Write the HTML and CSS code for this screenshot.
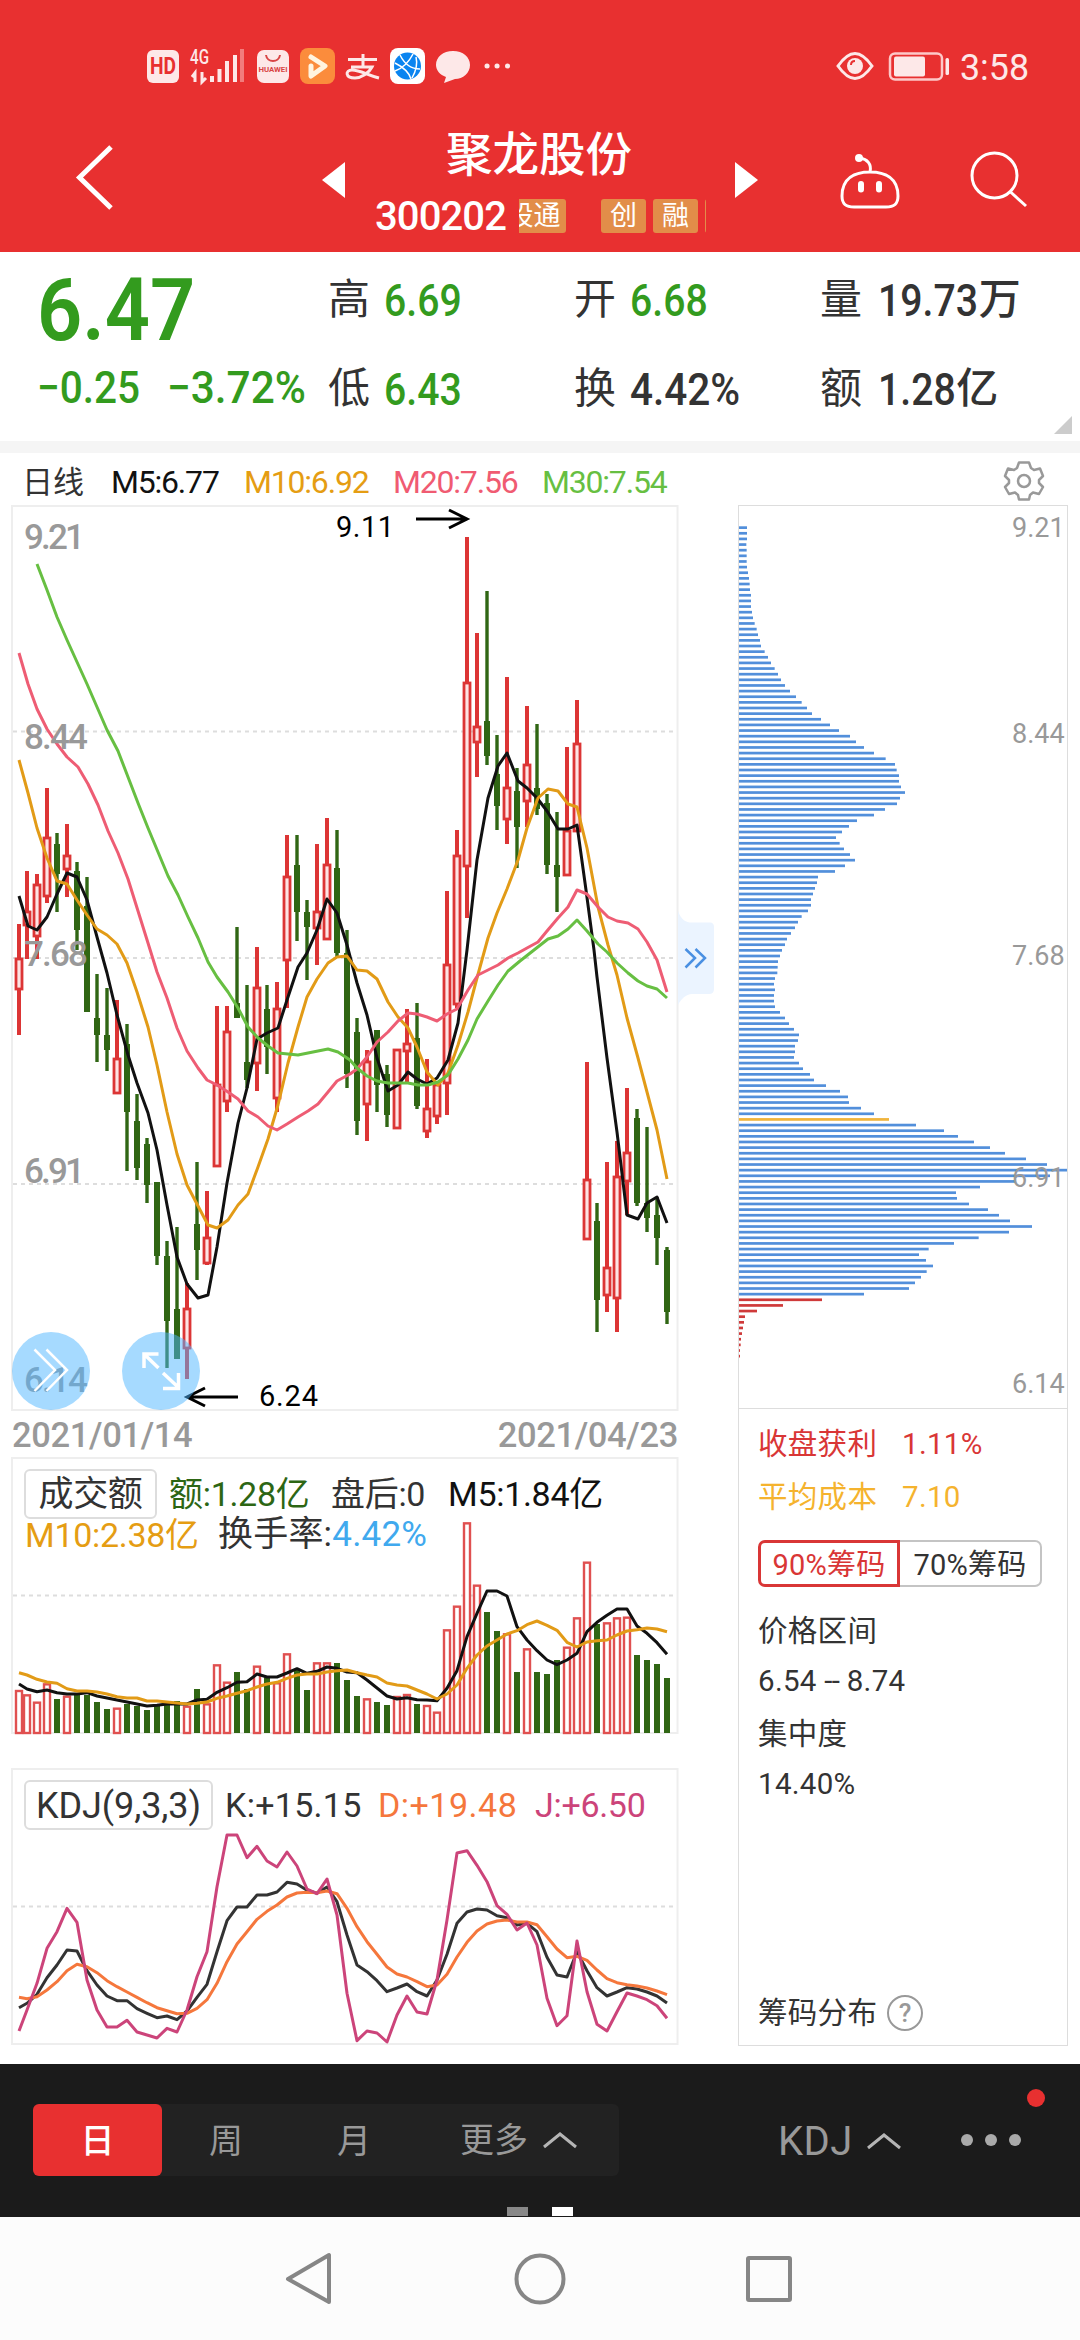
FILE: index.html
```html
<!DOCTYPE html>
<html lang="zh">
	<head>
		<meta charset="utf-8">
		<title>聚龙股份 300202</title>
		<link rel="stylesheet" href="styles.css">
	</head>
	<body>
		<header class="header">
			<div class="status">
				<svg class="status-left" width="400" height="50" viewBox="140 40 400 50">
					<rect x="147" y="50" width="32" height="33" rx="6" fill="#fde8e8"/>
					<text x="150" y="74" class="hd" textLength="26" lengthAdjust="spacingAndGlyphs">HD</text>
					<text x="190" y="64" class="net" textLength="19" lengthAdjust="spacingAndGlyphs">4G</text>
					<path d="M195 82V73l-3 4M202 72v10l4-4" stroke="#fde8e8" stroke-width="3" fill="none"/>
					<path d="M212 76v6M219.500 69v13M227 61v21M235 55v27" stroke="#fde8e8" stroke-width="4"/>
					<path d="M242 49v33" stroke="#f27c7c" stroke-width="4"/>
					<rect x="257" y="50" width="32" height="33" rx="7" fill="#fde8e8"/>
					<path d="M266 55c1 8 13 8 14 0" stroke="#d94545" stroke-width="2" fill="none"/>
					<text x="258.500" y="72" class="huawei" textLength="29" lengthAdjust="spacingAndGlyphs">HUAWEI</text>
					<rect x="300" y="48" width="35" height="36" rx="8" fill="#fb8c3c"/>
					<path d="M311 57l14 9-14 10V66" stroke="#fff4e0" stroke-width="5" stroke-linejoin="round" stroke-linecap="round" fill="none"/>
					<path d="M363 54v13M348 59.500h29M351 67h21c-3 6-11 11-17 11-10 0-10-8-3-8 8 0 15 5 27 8" stroke="#fde8e8" stroke-width="3" fill="none"/>
					<rect x="390" y="48" width="35" height="36" rx="8" fill="#fff"/>
					<circle cx="407.500" cy="66" r="13.500" fill="#0a84f0"/>
					<path d="M400 55c4 8 10 14 20 14M413 54c-4 8-10 14-18 17M395 63c8 4 14 9 16 16M416 57c2 8 0 14-4 21" stroke="#fff" stroke-width="1.500" fill="none"/>
					<path d="M453 51c10 0 17 6 17 14s-7 14-15 14l-11 4 2-6c-6-2-10-7-10-12 0-8 7-14 17-14z" fill="#fde8e8"/>
					<path d="M487 66h.1M497 66h.1M507.500 66h.1" stroke="#fde8e8" stroke-width="5" stroke-linecap="round"/>
				</svg>
				<svg width="200" height="50" viewBox="832 40 200 50">
					<path d="M838 66c7-10 12-12.500 17-12.500s10 2.500 17 12.500c-7 10-12 12.500-17 12.500S845 76 838 66z" stroke="#fde8e8" stroke-width="3" fill="none"/>
					<circle cx="855" cy="66" r="8" fill="#fde8e8"/>
					<path d="M851 65c0-3 2-4 4-4" stroke="#e83030" stroke-width="2" fill="none"/>
					<rect x="890" y="53.500" width="52" height="26" rx="5" stroke="#fdc8c8" stroke-width="2.500" fill="none"/>
					<rect x="894" y="56.500" width="31" height="20" rx="2" fill="#fde8e8"/>
					<rect x="945.500" y="58" width="3.500" height="17" rx="1.500" fill="#fde8e8"/>
					<text x="960" y="80" class="clock" textLength="69" lengthAdjust="spacingAndGlyphs">3:58</text>
				</svg>
			</div>
			<div class="titlebar">
				<svg class="back" width="44" height="70" viewBox="70 142 44 70"><path d="M111 147L79.500 177.500 111 208" stroke="#fff" stroke-width="5" fill="none"/></svg>
				<svg class="prev" width="23" height="36"><path d="M0 18L23 0v36z" fill="#fff"/></svg>
				<div class="stock">
					<h1>聚龙股份</h1>
					<div class="code-row">
						<span class="code">300202</span>
						<span class="tags">
							<i class="tag tag-cut">股通</i><i class="tag">创</i><i class="tag">融</i><i class="tag tag-end"></i>
						</span>
					</div>
				</div>
				<svg class="next" width="23" height="36"><path d="M0 0l23 18L0 36z" fill="#fff"/></svg>
				<svg class="robot" width="66" height="60" viewBox="837 152 66 60" fill="none" stroke="#fff" stroke-width="3">
					<path d="M870 172c-15 0-28 6-28 24 0 9 5 11 12 11h32c7 0 12-2 12-11 0-18-13-24-28-24zM870 172c2-8-3-13-10-14"/>
					<circle cx="859" cy="158" r="3" fill="#fff" stroke-width="2"/>
					<path d="M861 184v5.500M879 184v5.500" stroke-width="6" stroke-linecap="round"/>
				</svg>
				<svg class="search" width="60" height="60" viewBox="968 150 60 60" fill="none" stroke="#fff" stroke-width="3"><circle cx="994.500" cy="175.500" r="22.500"/><path d="M1010 191.500l16 14.500"/></svg>
			</div>
		</header>

		<section class="quote">
			<div class="price-col">
				<b class="price">6.47</b>
				<p><b class="num num-diff change">−0.25</b><b class="num num-rate">−3.72%</b></p>
			</div>
			<dl class="stat">
				<dt>高</dt><dd><b class="num green">6.69</b></dd>
				<dt>低</dt><dd><b class="num green">6.43</b></dd>
			</dl>
			<dl class="stat">
				<dt>开</dt><dd><b class="num green">6.68</b></dd>
				<dt>换</dt><dd><b class="num num-diff">4.42%</b></dd>
			</dl>
			<dl class="stat stat-wide">
				<dt>量</dt><dd><b class="num">19.73</b><em>万</em></dd>
				<dt>额</dt><dd><b class="num short">1.28</b><em>亿</em></dd>
			</dl>
			<i class="corner"></i>
		</section>

		<section class="ma-row">
			<span class="period">日线</span>
			<span class="m5">M5:6.77</span>
			<span class="m10">M10:6.92</span>
			<span class="m20">M20:7.56</span>
			<span class="m30">M30:7.54</span>
			<svg class="gear" width="44" height="44" viewBox="-22 -22 44 44" fill="none" stroke="#999" stroke-width="2.500" stroke-linejoin="round">
				<path d="M-5 -18.500H5L7 -13 10 -11 16 -12.500 19 -5 15 -1V2L19 6 15 13 9 11.500 6 14 5 18.500H-5L-6 14-9 11.500-15 13-19 6-15 2V-1L-19 -5-16 -12.500-10 -11-7 -13z"/>
				<circle r="6"/>
			</svg>
		</section>

		<main class="charts">
			<div class="left">
				<div class="panel">
					<svg id="kline" width="668" height="907" viewBox="11 505 668 907">
						<rect x="12" y="506" width="665.500" height="904" class="frame"/>
						<path d="M13 731.500H677M13 958H677M13 1184H677" class="grid"/>
						<g id="candles"></g>
						<g class="axis">
							<text x="24" y="549" textLength="61">9.21</text>
							<text x="24" y="749" textLength="64">8.44</text>
							<text x="24" y="966" textLength="64">7.68</text>
							<text x="24" y="1183" textLength="61">6.91</text>
							<text x="24" y="1392" textLength="64">6.14</text>
						</g>
						<g class="note">
							<text x="336" y="537" textLength="58">9.11</text>
							<path d="M416 519H466M449 510L467 519 449 528"/>
							<text x="259" y="1406" textLength="59">6.24</text>
							<path d="M238 1397H188M205 1388L187 1397 205 1406"/>
						</g>
						<g class="round-btn">
							<circle cx="51" cy="1371" r="39"/>
							<path d="M34.500 1349.500L55 1370 34.500 1391M46.500 1349.500L67 1370 46.500 1391"/>
							<circle cx="161" cy="1371" r="39"/>
							<path class="expand" d="M158.500 1354H144V1368M144 1354L158.500 1368M163 1373L179 1388M163 1388.500H178.500V1373"/>
						</g>
					</svg>
					<svg class="fold" width="37" height="94" viewBox="678 911 37 94">
						<path d="M678 911C681 920 686 922.500 692 922.500H710Q714 922.500 714 927V989Q714 994 709 994H692C686 994 681 999 678 1005z" fill="#ebf4ff"/>
						<path d="M685.500 949l9.500 9-9.500 9.500M695.500 949l9.500 9-9.500 9.500" stroke="#4a90e2" stroke-width="2.500" fill="none"/>
					</svg>
				</div>
				<div class="dates"><span>2021/01/14</span><span>2021/04/23</span></div>
				<div class="panel">
					<div class="legend">
						<p><span class="pick">成交额</span><span class="deal">额:1.28亿</span><span class="after">盘后:0</span><span class="v5">M5:1.84亿</span></p>
						<p class="second"><span class="v10">M10:2.38亿</span><span class="turn">换手率:<em>4.42%</em></span></p>
					</div>
					<svg id="volume" width="668" height="278" viewBox="11 7 668 278">
						<rect x="12" y="8" width="665.500" height="275" class="frame"/>
						<path d="M13 145.500H677" class="grid"/>
					</svg>
				</div>
				<div class="panel kdj-panel">
					<div class="legend">
						<p><span class="pick pick-kdj">KDJ(9,3,3)</span><span class="k">K:+15.15</span><span class="d">D:+19.48</span><span class="j">J:+6.50</span></p>
					</div>
					<svg id="kdj" width="668" height="278" viewBox="11 18 668 278">
						<rect x="12" y="19" width="665.500" height="275" class="frame"/>
						<path d="M13 156.500H677" class="grid"/>
					</svg>
				</div>
			</div>

			<div class="right">
				<svg id="chips" width="328" height="902" viewBox="739 506 328 902">
					<g id="chipBars"></g>
					<g class="axis-small">
						<text x="1012" y="537">9.21</text>
						<text x="1012" y="743">8.44</text>
						<text x="1012" y="965">7.68</text>
						<text x="1012" y="1187">6.91</text>
						<text x="1012" y="1393">6.14</text>
					</g>
				</svg>
				<div class="chip-info">
					<p class="profit"><span>收盘获利</span>1.11%</p>
					<p class="cost"><span>平均成本</span>7.10</p>
					<div class="switch"><a class="on">90%筹码</a><a>70%筹码</a></div>
					<p class="t1">价格区间</p>
					<p class="t2">6.54 <i>--</i> 8.74</p>
					<p class="t3">集中度</p>
					<p class="t4">14.40%</p>
					<p class="help">筹码分布<i>?</i></p>
				</div>
			</div>
		</main>

		<footer class="toolbar">
			<div class="tabs">
				<a class="on">日</a>
				<a>周</a>
				<a>月</a>
				<a class="more">更多<svg width="34" height="18"><path d="M1 16L17 3l16 13"/></svg></a>
			</div>
			<div class="indicator">KDJ<svg width="34" height="18"><path d="M1 16L17 3l16 13"/></svg></div>
			<div class="dots"><i></i><i></i><i></i></div>
			<i class="badge"></i>
			<div class="pages"><i></i><i class="cur"></i></div>
		</footer>
		<nav class="sysnav">
			<svg width="1080" height="123" viewBox="0 2217 1080 123" fill="none" stroke="#868686" stroke-width="4" stroke-linejoin="round">
				<path d="M329 2255V2302L288 2279z"/>
				<circle cx="540" cy="2279" r="23.500"/>
				<rect x="748" y="2258" width="42" height="42" rx="1"/>
			</svg>
		</nav>
		<script src="chart.js"></script>
	</body>
</html>
```
FILE: styles.css
```css
* {
	margin: 0;
	padding: 0;
	box-sizing: border-box;
}

body {
	width: 1080px;
	height: 2340px;
	overflow: hidden;
	background-color: #fff;
	color: #333;
	font-family: Roboto, "Noto Sans CJK SC", sans-serif;
}

svg {
	display: block;
	flex: none;
}

i, em {
	font-style: normal;
}

/* 顶部 */
.header {
	height: 252px;
	background-color: #e83030;
	color: #fff;
}

.status {
	display: flex;
	justify-content: space-between;
	height: 130px;
	padding: 40px 48px 0 140px;
}

.hd {
	font-size: 23px;
	font-weight: bold;
	fill: #e83030;
}

.net {
	font-size: 20px;
	font-weight: 500;
	fill: #fde8e8;
}

.huawei {
	font-size: 8px;
	font-weight: bold;
	fill: #d94545;
}

.clock {
	font-size: 36px;
	fill: #fde8e8;
}

.titlebar {
	display: flex;
	height: 122px;
}

.back {
	margin: 12px 0 0 70px;
}

.prev {
	margin: 32px 0 0 208px;
}

.stock {
	width: 390px;
	padding-left: 30px;
}

.stock h1 {
	height: 60px;
	padding-left: 71px;
	line-height: 50px;
	font-size: 46.5px;
	font-weight: 500;
	white-space: nowrap;
}

.code-row {
	display: flex;
	height: 50px;
}

.code {
	width: 144px;
	line-height: 53px;
	font-size: 40px;
	font-weight: 500;
	letter-spacing: -0.9px;
}

.tags {
	display: flex;
	width: 187px;
	margin-top: 9px;
	overflow: hidden;
}

.tag {
	flex: none;
	width: 45px;
	height: 34px;
	margin-right: 7px;
	border-radius: 3px;
	background-color: #e28d49;
	line-height: 35px;
	font-size: 27px;
	text-align: center;
}

.tag-cut {
	width: 65px;
	margin-left: -18px;
	margin-right: 35px;
}

.next {
	margin: 32px 0 0 0;
}

.robot {
	margin: 22px 0 0 79px;
}

.search {
	margin: 20px 0 0 65px;
}

/* 行情 */
.quote {
	position: relative;
	display: flex;
	height: 201px;
	border-bottom: 12px solid #f5f5f5;
}

.price-col {
	width: 328px;
	padding-left: 37px;
	color: #339b1e;
}

.price {
	display: block;
	height: 108px;
	padding-top: 8px;
	line-height: 100px;
	font-size: 88px;
	font-weight: 600;
	transform: scaleX(0.9);
	transform-origin: 0 0;
}

.price-col p {
	display: flex;
}

.num {
	display: inline-block;
	line-height: 56px;
	font-size: 45px;
	font-weight: 500;
	transform: scaleX(0.87);
	transform-origin: 0 50%;
}

.num-diff {
	transform: scaleX(0.9);
}

.num-rate {
	transform: scaleX(0.94);
}

.change {
	width: 130px;
}

.stat {
	display: grid;
	grid-template-columns: 56px 190px;
	grid-template-rows: 89px 90px;
	width: 246px;
	padding-top: 21px;
}

.stat dt {
	line-height: 54px;
	font-size: 42px;
}

.stat dd {
	display: flex;
	line-height: 54px;
}

.stat-wide {
	grid-template-columns: 58px 200px;
}

.stat em {
	margin-left: -14px;
	font-size: 42px;
	font-weight: 500;
}

.stat .short + em {
	margin-left: -11px;
}

.green {
	color: #339b1e;
}

.corner {
	position: absolute;
	right: 8px;
	bottom: 7px;
	border-left: 18px solid transparent;
	border-bottom: 18px solid #ccc;
}

/* 均线 */
.ma-row {
	display: flex;
	height: 52px;
	padding-left: 22px;
	line-height: 59px;
	font-size: 32px;
	letter-spacing: -1.2px;
	white-space: nowrap;
}

.ma-row span {
	width: 149px;
}

.ma-row .period {
	width: 89px;
	font-size: 31px;
	letter-spacing: 0;
}

.ma-row .m5 {
	width: 133px;
	color: #111;
}

.m10 {
	color: #e59d13;
}

.m20 {
	color: #f05b72;
}

.m30 {
	color: #67bf42;
}

.gear {
	margin: 6px 0 0 311px;
}

/* 图表 */
.charts {
	display: flex;
	height: 1559px;
	padding-left: 11px;
}

.left {
	width: 668px;
}

.panel {
	position: relative;
}

.kdj-panel {
	margin-top: 33px;
}

.fold {
	position: absolute;
	left: 667px;
	top: 406px;
}

.frame {
	fill: none;
	stroke: #eee;
	stroke-width: 2;
}

.grid {
	stroke: #ddd;
	stroke-width: 2;
	stroke-dasharray: 4 4;
}

.axis {
	font-size: 35px;
	font-weight: 500;
	fill: #999;
}

.axis-small {
	font-size: 27px;
	fill: #999;
}

.note text {
	font-size: 29px;
}

.note path {
	fill: none;
	stroke: #000;
	stroke-width: 3;
}

.round-btn circle {
	fill: rgba(78, 181, 255, 0.5);
}

.round-btn path {
	fill: none;
	stroke: #fff;
	stroke-width: 2.5;
}

.round-btn .expand {
	stroke-width: 3.5;
}

.line {
	fill: none;
	stroke-width: 3;
	stroke-linejoin: round;
}

.dates {
	display: flex;
	justify-content: space-between;
	height: 45px;
	padding: 0 1px 0 1px;
	line-height: 46px;
	font-size: 34.5px;
	font-weight: 500;
	letter-spacing: -0.35px;
	color: #999;
}

.legend {
	position: absolute;
	left: 13px;
	top: 12px;
	font-size: 34px;
	letter-spacing: -0.3px;
	white-space: nowrap;
}

.legend p {
	display: flex;
	line-height: 50px;
}

.legend .second {
	margin-top: -9px;
	padding-left: 1px;
}

.pick {
	width: 133px;
	height: 50px;
	margin-right: 12px;
	border: 2px solid #ddd;
	border-radius: 6px;
	line-height: 48px;
	font-size: 35px;
	text-align: center;
}

.deal {
	width: 162px;
	color: #2d6614;
}

.after {
	width: 117px;
}

.v5 {
	color: #111;
}

.v10 {
	width: 193px;
	color: #e59d13;
}

.turn {
	font-size: 35px;
	letter-spacing: 0.2px;
}

.turn em {
	color: #40a9ee;
}

.pick-kdj {
	width: 189px;
	font-size: 36px;
	letter-spacing: -0.1px;
}

.k {
	width: 153px;
	letter-spacing: 0.3px;
}

.d {
	width: 157px;
	color: #f5773c;
	letter-spacing: 0.5px;
}

.j {
	color: #cc447a;
}

/* 筹码 */
.right {
	width: 330px;
	height: 1541px;
	margin-left: 59px;
	border: 1px solid #ddd;
}

.chip-info {
	height: 637px;
	padding: 10px 0 0 19px;
	border-top: 1px solid #ddd;
	font-size: 29.5px;
	line-height: 50px;
}

.chip-info p {
	letter-spacing: 0.3px;
}

.chip-info p span {
	display: inline-block;
	width: 144px;
}

.profit {
	color: #d93636;
}

.cost {
	margin-top: 3px;
	color: #f5b32e;
}

.switch {
	display: flex;
	width: 284px;
	height: 47px;
	margin-top: 18px;
	font-size: 29px;
	letter-spacing: 0.2px;
	line-height: 46px;
	text-align: center;
}

.switch a {
	width: 142px;
	height: 47px;
	border: 2px solid #c4c4c4;
	border-left: none;
	border-radius: 0 7px 7px 0;
}

.switch .on {
	border: 3px solid #d93636;
	border-radius: 7px 0 0 7px;
	line-height: 44px;
	color: #d93636;
}

.t1 {
	margin-top: 19px;
}

.t2 i {
	letter-spacing: -0.8px;
}

.t3 {
	margin-top: 3px;
}

.chip-info .help {
	display: flex;
	align-items: center;
	margin-top: 179px;
}

.help i {
	width: 36px;
	height: 36px;
	margin-left: 10px;
	border: 2.5px solid #999;
	border-radius: 50%;
	line-height: 32px;
	font-size: 26px;
	font-weight: 500;
	text-align: center;
	color: #999;
}

/* 底部 */
.toolbar {
	position: relative;
	display: flex;
	height: 153px;
	padding: 40px 0 0 33px;
	background-color: #1b1b1b;
	color: #999;
}

.tabs {
	display: flex;
	width: 586px;
	height: 72px;
	border-radius: 6px;
	background-color: #222;
	line-height: 75px;
	font-size: 34px;
}

.tabs a {
	width: 128px;
	text-align: center;
}

.tabs .on {
	width: 129px;
	border-radius: 6px;
	background-color: #e83030;
	font-weight: 500;
	color: #fff;
}

.tabs .more {
	display: flex;
	align-items: center;
	width: 201px;
	padding-left: 42px;
}

.toolbar svg {
	margin-left: 15px;
	fill: none;
	stroke: #b5b5b5;
	stroke-width: 3;
}

.indicator {
	display: flex;
	align-items: center;
	width: 341px;
	height: 72px;
	padding: 2px 0 0 159px;
	font-size: 40px;
	letter-spacing: 0.4px;
}

.indicator svg {
	margin-left: 14px;
}

.dots {
	display: flex;
	gap: 12px;
	padding: 30px 0 0 1px;
}

.dots i {
	width: 12px;
	height: 12px;
	border-radius: 50%;
	background-color: #aaa;
}

.badge {
	position: absolute;
	left: 1027px;
	top: 25px;
	width: 18px;
	height: 18px;
	border-radius: 50%;
	background-color: #e83030;
}

.pages {
	position: absolute;
	left: 507px;
	bottom: 1px;
	display: flex;
	gap: 24px;
}

.pages i {
	width: 21px;
	height: 9px;
	background-color: #888;
}

.pages .cur {
	background-color: #fff;
}

.sysnav {
	height: 123px;
	background-color: #fcfcfc;
}
```
FILE: chart.js
```js
var NS = "http://www.w3.org/2000/svg";
var RED = "#dc3535", GREEN = "#306614";

function add(parent, name, attrs) {
	var el = document.createElementNS(NS, name);
	for (var k in attrs) {
		el.setAttribute(k, attrs[k]);
	}
	parent.appendChild(el);
	return el;
}

//第一根K线贴着左边框
function posX(i) {
	return i == 0 ? 19 : 17 + i * 10;
}

//K线: 涨跌(1红 0绿), 最高, 实体上, 实体下, 最低
var candles = [
	[1,924,958,989,1035],[1,871,911,925,959],[1,874,884,936,959],[1,788,837,896,903],[0,833,844,874,912],[1,824,855,869,897],
	[0,862,871,930,950],[0,877,906,1012,1012],[0,974,1018,1035,1062],[0,988,1035,1050,1071],[1,1000,1058,1093,1094],[0,1024,1044,1112,1171],
	[0,1094,1121,1168,1180],[0,1138,1144,1185,1203],[0,1182,1182,1256,1265],[0,1241,1256,1321,1368],[0,1227,1309,1359,1359],[1,1283,1308,1348,1379],
	[0,1162,1224,1250,1280],[1,1191,1237,1263,1265],[1,1006,1084,1166,1166],[1,1006,1031,1101,1112],[0,927,1003,1018,1018],[0,985,1062,1080,1088],
	[1,947,987,1063,1091],[0,985,1009,1047,1074],[1,982,1008,1098,1112],[1,835,876,960,1008],[0,835,865,912,941],[0,900,912,927,980],
	[1,844,911,928,965],[1,818,864,939,939],[0,830,868,953,958],[0,930,953,1074,1088],[0,1018,1032,1121,1135],[1,1050,1061,1104,1141],
	[0,1030,1030,1085,1112],[0,1065,1074,1115,1127],[1,1049,1049,1128,1128],[1,1009,1043,1051,1082],[0,1003,1038,1106,1109],[1,1059,1108,1131,1138],
	[1,1083,1084,1116,1124],[1,891,964,1083,1115],[1,830,855,1004,1008],[1,537,682,866,918],[1,633,726,742,777],[0,591,721,756,765],
	[0,735,774,806,830],[1,677,787,819,844],[0,768,791,827,868],[1,706,764,801,827],[0,724,788,809,815],[0,794,803,865,874],
	[0,812,865,877,912],[1,747,830,875,875],[1,700,743,831,832],[1,1062,1179,1239,1239],[0,1203,1221,1300,1332],[1,1162,1267,1295,1312],
	[1,1141,1176,1298,1332],[1,1088,1152,1181,1215],[0,1109,1118,1203,1206],[0,1127,1203,1218,1232],[0,1197,1215,1238,1265],[0,1247,1250,1312,1324]
];

var ma30 = "37,564 47,590 57,617 67,640 77,662 87,684 97,707 107,730 118,751 128,777 138,803 148,828 158,852 168,876 178,895 188,917 198,938 208,962 217,977 228,992 238,1008 248,1027 258,1038 268,1046 278,1053 298,1055 308,1053 318,1051 328,1049 338,1052 350,1060 357,1068 367,1076 377,1081 388,1083 408,1083 418,1085 428,1085 438,1082 448,1075 458,1059 468,1040 477,1019 488,1001 498,985 508,971 520,961 534,950 548,939 558,936 568,929 577,920 587,931 598,944 607,952 617,963 628,973 638,981 647,986 657,989 667,998";
var ma20 = "19,653 28,684 37,709 47,729 57,744 67,757 78,767 88,784 98,805 108,831 118,853 128,879 138,911 148,943 157,972 167,998 177,1028 187,1051 198,1068 207,1080 217,1085 228,1092 238,1099 248,1111 258,1117 268,1126 277,1130 287,1124 298,1117 308,1111 318,1104 328,1092 337,1081 350,1074 357,1069 367,1057 377,1042 388,1032 398,1021 408,1013 417,1014 427,1017 437,1021 447,1014 457,1009 468,990 478,975 488,970 498,965 508,958 518,953 527,948 538,942 547,931 558,918 568,907 577,890 587,894 598,907 608,917 617,921 628,923 638,929 647,942 657,960 667,992";
var ma10 = "19,760 28,793 37,828 47,858 57,881 67,884 77,900 87,915 97,929 107,935 117,944 127,963 137,992 148,1027 157,1065 167,1112 177,1154 187,1185 198,1206 208,1225 217,1228 228,1220 238,1205 248,1194 258,1167 268,1139 278,1105 288,1063 298,1027 307,997 317,979 328,963 337,957 347,956 357,970 367,971 377,979 388,1002 398,1017 408,1028 417,1047 427,1072 438,1085 448,1073 458,1045 468,1012 477,978 488,938 497,913 507,889 518,860 527,828 538,798 548,789 558,791 568,804 577,807 587,848 598,907 608,945 617,975 627,1018 638,1058 647,1092 657,1130 667,1179";
var ma5 = "19,896 28,926 37,930 47,917 57,894 67,873 77,877 87,900 97,937 107,973 117,1015 128,1055 137,1083 148,1113 157,1150 167,1205 177,1257 187,1284 198,1298 208,1295 217,1247 227,1183 238,1123 247,1088 257,1039 267,1033 278,1028 287,1000 298,967 307,953 317,930 327,899 337,913 347,945 357,983 367,1015 377,1058 388,1091 398,1085 408,1072 417,1079 427,1084 437,1078 448,1060 458,1023 467,950 477,860 488,798 498,766 507,753 518,781 527,788 537,798 547,811 558,829 568,829 577,825 586,890 594,950 597,977 607,1058 617,1132 627,1215 638,1219 647,1203 657,1197 667,1223";

var volumes = [
	720,733,755,700,747,737,735,735,756,777,773,762,768,780,765,765,753,767,717,760,643,695,
	666,717,647,682,697,610,657,720,637,637,639,690,738,745,756,765,738,732,762,765,785,538,
	467,217,404,486,543,550,666,595,666,672,630,590,502,335,522,517,502,500,615,630,642,684
];
var vol5 = [
	702,717,725,720,728,732,732,728,738,744,750,756,762,768,766,762,762,762,750,748,727,713,
	697,695,672,681,681,669,656,670,664,651,655,666,668,690,714,738,747,743,749,750,752,715,
	662,560,490,423,423,438,530,570,602,630,644,630,610,545,517,496,477,477,528,550,578,613
];
var vol10 = [
	668,675,688,696,700,716,723,723,726,732,740,744,744,753,753,756,759,762,760,756,745,738,
	730,722,711,702,697,685,675,672,672,666,662,660,668,675,681,699,705,708,720,732,747,732,
	705,655,615,588,570,552,542,524,513,526,541,577,591,576,572,570,555,543,539,534,537,545
];
var kLine = [
	773,760,733,683,645,600,603,662,705,738,752,752,776,790,803,798,809,783,742,703,605,512,
	471,471,435,435,426,397,402,421,430,411,455,555,645,665,692,725,714,702,725,738,690,613,
	520,486,477,480,497,503,525,520,545,622,675,681,605,662,713,738,726,713,717,726,738,759
];
var dLine = [
	742,746,740,720,695,662,643,650,668,692,710,726,742,758,773,782,791,790,775,749,700,635,
	582,545,508,484,465,441,429,427,428,423,431,475,530,575,613,651,672,681,695,710,705,673,
	621,577,543,522,513,510,516,516,524,560,597,623,619,631,660,686,698,704,708,714,723,734
];
var jLine = [
	843,780,700,595,545,475,517,690,780,831,831,811,846,855,864,835,846,780,680,605,410,255,
	255,323,289,333,351,306,348,417,431,387,495,730,872,843,849,876,795,738,786,792,690,510,
	309,302,346,395,467,493,540,519,585,745,827,797,573,725,823,843,785,729,738,749,767,805
];

//筹码分布, 从高价到低价
var chips = [
	81,81,81,79,80,80,80,81,84,87,89,90,93,93,93,96,99,104,110,114,120,123,134,144,153,164,174,183,195,210,
	228,245,261,276,303,330,357,390,408,432,462,497,525,530,537,537,543,555,540,531,495,462,411,387,366,348,
	359,372,390,405,375,345,294,291,285,279,273,273,264,245,234,225,213,201,195,186,180,174,173,172,165,162,
	165,162,162,165,180,195,207,222,237,234,225,225,222,237,249,270,282,318,360,384,387,423,462,507,588,672,
	714,762,810,855,918,981,1041,990,885,780,708,711,747,804,837,870,936,867,776,702,626,597,618,639,620,603,
	585,567,432,306,189,111,75,72,69,66,63,62,60,60
];

function drawLine(svg, points, color) {
	add(svg, "polyline", {points: points, stroke: color, "class": "line"});
}

function toPoints(list) {
	return list.map(function(v, i) {
		return posX(i) + "," + (v / 3).toFixed(1);
	}).join(" ");
}

//K线图
var g = document.querySelector("#candles");
candles.forEach(function(c, i) {
	var x = posX(i);
	if (c[0]) {
		add(g, "path", {d: "M" + x + " " + c[1] + "V" + c[2] + "M" + x + " " + c[3] + "V" + c[4], stroke: RED, "stroke-width": 4});
		add(g, "rect", {x: x - 3, y: c[2] + 1, width: 6, height: c[3] - c[2] - 1, fill: "#fde3e3", stroke: RED, "stroke-width": 2.8});
	} else {
		add(g, "path", {d: "M" + x + " " + c[1] + "V" + c[4], stroke: GREEN, "stroke-width": 3.4});
		add(g, "rect", {x: x - 3, y: c[2], width: 6, height: c[3] - c[2], fill: GREEN});
	}
});
drawLine(g, ma5, "#111");
drawLine(g, ma10, "#e29b17");
drawLine(g, ma20, "#ee5d74");
drawLine(g, ma30, "#67bf42");

//成交额
var vol = document.querySelector("#volume");
volumes.forEach(function(v, i) {
	var x = posX(i), y = v / 3;
	if (candles[i][0]) {
		add(vol, "rect", {x: x - 3, y: y + 1, width: 6, height: 282 - y, fill: "#fff", stroke: "#e05050", "stroke-width": 2.4});
	} else {
		add(vol, "rect", {x: x - 3, y: y, width: 6, height: 283 - y, fill: GREEN});
	}
});
drawLine(vol, toPoints(vol5), "#111");
drawLine(vol, toPoints(vol10), "#e29b17");

//KDJ
var kdj = document.querySelector("#kdj");
drawLine(kdj, toPoints(kLine), "#333");
drawLine(kdj, toPoints(dLine), "#f5773c");
drawLine(kdj, toPoints(jLine), "#cc447a");

//筹码
var bars = document.querySelector("#chipBars");
chips.forEach(function(v, i) {
	var color = "#528fdb";
	if (i == 105) {
		color = "#f0b43c";
	} else if (i > 136) {
		color = "#cf3a3a";
	}
	add(bars, "rect", {x: 739, y: (526.3 + i * 5.636).toFixed(2), width: (v - 57) / 3, height: 2.7, fill: color});
});
```
